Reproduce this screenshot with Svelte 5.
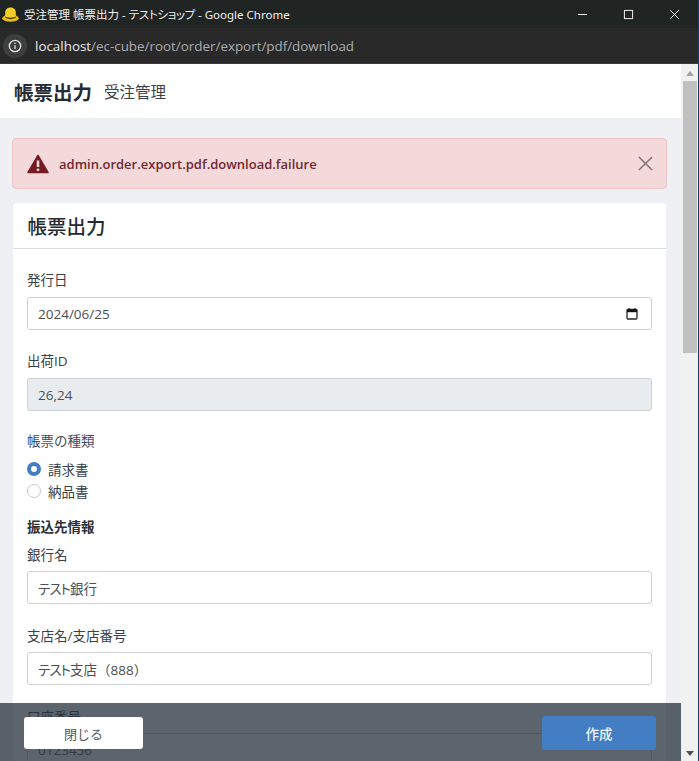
<script>
  const banks = [
    { label: '銀行名', kana: 'テスト', value: '銀行' },
    { label: '支店名/支店番号', kana: 'テスト', value: '支店（888）' },
    { label: '口座番号', kana: '', value: '0123456' }
  ];
</script>

<div class="window">
  <div class="titlebar">
    <svg class="favicon" viewBox="0 0 16 14">
      <ellipse cx="8" cy="10.500" rx="7.800" ry="3.300" fill="#e9bd12" />
      <path d="M3 9.500V5C3 2 5.500 0.500 8 0.500S13 2 13 5v4.500c-2 1.700-8 1.700-10 0z" fill="#f4cf2a" />
      <path d="M3 8.600c2 1.800 8 1.800 10 0v1.300c-2 1.700-8 1.700-10 0z" fill="#3a3208" />
    </svg>
    <span class="win-title">受注管理 帳票出力 - <span class="kana title-kana">テストショップ</span> - Google Chrome</span>
    <div class="win-controls">
      <svg viewBox="0 0 12 12"><path d="M1 6h10" stroke="#fff" /></svg>
      <svg viewBox="0 0 12 12"><rect x="1.500" y="1.500" width="9" height="9" fill="none" stroke="#fff" /></svg>
      <svg viewBox="0 0 12 12"><path d="M1 1l10 10M11 1L1 11" stroke="#fff" /></svg>
    </div>
  </div>

  <div class="addressbar">
    <span class="site-info">
      <svg viewBox="0 0 16 16" width="14" height="14">
        <circle cx="8" cy="8" r="6.500" fill="none" stroke="#e3e3e3" stroke-width="1.500" />
        <path d="M8 7v4.500M8 4.300v1.500" stroke="#e3e3e3" stroke-width="1.500" />
      </svg>
    </span>
    <span class="url"><b>localhost</b>/ec-cube/root/order/export/pdf/download</span>
  </div>

  <div class="viewport">
    <div class="page">
      <header class="page-header">
        <h1>帳票出力</h1>
        <span>受注管理</span>
      </header>

      <main class="content">
        <div class="alert">
          <svg class="alert-icon" viewBox="0 0 22 20">
            <path d="M11 1.500L21 18.500H1z" fill="#721c24" stroke="#721c24" stroke-width="1.500" stroke-linejoin="round" />
            <path d="M11 6.500v6.500" stroke="#f3d9d9" stroke-width="2.600" />
            <circle cx="11" cy="15.800" r="1.400" fill="#f3d9d9" />
          </svg>
          <span class="alert-text">admin.order.export.pdf.download.failure</span>
          <svg class="alert-close" viewBox="0 0 16 16"><path d="M1 1l14 14M15 1L1 15" stroke="#7d7074" stroke-width="1.500" /></svg>
        </div>

        <section class="card">
          <h2 class="card-header">帳票出力</h2>
          <div class="card-body">
            <div class="field">
              <label for="issue-date">発行日</label>
              <div class="input date" id="issue-date">
                <span>2024/06/25</span>
                <svg viewBox="0 0 12 12" width="12" height="13">
                  <rect x="1" y="2" width="10" height="9.500" rx="1" fill="#fff" stroke="#222" stroke-width="1.300" />
                  <path d="M1 3.500h10" stroke="#111" stroke-width="2.400" />
                  <path d="M3 0.500v2M9 0.500v2" stroke="#111" />
                </svg>
              </div>
            </div>

            <div class="field">
              <label for="shipping-id">出荷ID</label>
              <div class="input disabled" id="shipping-id">26,24</div>
            </div>

            <div class="type-group">
              <span class="type-label">帳票の種類</span>
              <div class="radios">
                <div class="radio checked"><i></i>請求書</div>
                <div class="radio"><i></i>納品書</div>
              </div>
            </div>

            <h3 class="sub-title">振込先情報</h3>

            {#each banks as item}
              <div class="field bank">
                <label for={item.label}>{item.label}</label>
                <div class="input" id={item.label}><span><span class="kana input-kana">{item.kana}</span>{item.value}</span></div>
              </div>
            {/each}
          </div>
        </section>
      </main>
    </div>

    <div class="scrollbar">
      <svg viewBox="0 0 8 5" width="8" height="5"><path d="M4 0l4 5H0z" fill="#a3a3a3" /></svg>
      <div class="track"><div class="thumb"></div></div>
      <svg viewBox="0 0 8 5" width="8" height="5"><path d="M0 0h8L4 5z" fill="#505050" /></svg>
    </div>

    <div class="footer-bar">
      <button class="btn-close">閉じる</button>
      <button class="btn-create">作成</button>
    </div>
  </div>
</div>

<style>
  :global(body) {
    margin: 0;
    font-family: 'Open Sans', 'Noto Sans CJK JP', sans-serif;
  }

  .window {
    width: 699px;
    height: 761px;
    display: flex;
    flex-direction: column;
    overflow: hidden;
    background: #eff0f4;
    box-sizing: border-box;
    border-right: 1px solid #1c3a6e;
    font-family: 'Open Sans', 'Noto Sans CJK JP', sans-serif;
  }

  .kana { font-feature-settings: "palt"; }
  .title-kana { letter-spacing: -0.3px; }
  .input-kana { letter-spacing: -0.9px; }

  .titlebar {
    height: 28px;
    flex: none;
    display: flex;
    align-items: center;
    background: #202423;
    color: #f0f0f0;
    font-size: 11.5px;
    padding-left: 2px;
  }
  .favicon { width: 17px; height: 15px; margin-right: 5px; }
  .win-title { font-family: 'Noto Sans', 'Noto Sans CJK JP', sans-serif; white-space: nowrap; }
  .win-controls {
    margin-left: auto;
    display: flex;
    gap: 35px;
    padding-right: 18px;
  }
  .win-controls svg { width: 11px; height: 11px; }

  .addressbar {
    height: 36px;
    flex: none;
    box-sizing: border-box;
    display: flex;
    align-items: center;
    background: #292929;
    border-bottom: 1px solid #3d3d3d;
    padding-left: 3px;
  }
  .site-info {
    width: 24px;
    height: 24px;
    border-radius: 50%;
    background: #3d3f3f;
    display: flex;
    align-items: center;
    justify-content: center;
    margin-right: 8px;
  }
  .url { font-size: 13.4px; color: #a9adb0; white-space: nowrap; }
  .url b { font-weight: 400; color: #e8eaed; }

  .viewport {
    flex: 1;
    min-height: 0;
    display: flex;
    position: relative;
    overflow: hidden;
  }

  .page { flex: 1; min-width: 0; overflow: hidden; }

  .page-header {
    height: 54px;
    box-sizing: border-box;
    background: #fff;
    display: flex;
    align-items: center;
    gap: 12px;
    padding-left: 14px;
    color: #252a33;
  }
  .page-header h1 { margin: 0; font-size: 19.5px; font-weight: 700; }
  .page-header span { font-size: 15.5px; color: #3c4048; }

  .content { padding: 20px 14px 0 12px; }

  .alert {
    height: 51px;
    box-sizing: border-box;
    display: flex;
    align-items: center;
    background: #f3d9d9;
    border: 1px solid #efc5c8;
    border-radius: 4px;
    padding: 0 13px 0 14px;
    margin-bottom: 14px;
  }
  .alert-icon { width: 22px; height: 20px; margin-right: 10px; }
  .alert-text { color: #6f2a33; font-size: 13px; font-weight: 600; }
  .alert-close { width: 15px; height: 15px; margin-left: auto; }

  .card {
    margin-left: 1px;
    margin-right: 1px;
    background: #fff;
    border-radius: 4px 4px 0 0;
  }
  .card-header {
    margin: 0;
    height: 46px;
    box-sizing: border-box;
    border-bottom: 1px solid #dedfe2;
    padding-left: 14.5px;
    display: flex;
    align-items: center;
    font-size: 19.5px;
    font-weight: 500;
    color: #252a33;
  }
  .card-body { padding: 21px 14px 0; }

  .field { margin-bottom: 21px; }
  .field label {
    display: block;
    font-size: 13.5px;
    line-height: 20px;
    color: #3a3f48;
    margin-bottom: 7px;
  }

  .input {
    height: 33px;
    box-sizing: border-box;
    border: 1px solid #ced0d4;
    border-radius: 3px;
    padding: 0 10px;
    display: flex;
    align-items: center;
    font-size: 13.5px;
    color: #4a4f57;
    background: #fff;
  }
  .date { justify-content: space-between; padding-right: 13px; }
  .disabled { background: #e9ecef; }

  .type-label {
    display: block;
    font-size: 13.5px;
    line-height: 18px;
    color: #44495c;
  }
  .radios { margin-top: 8px; }
  .radio {
    display: flex;
    align-items: center;
    gap: 7px;
    height: 22px;
    font-size: 13.5px;
    color: #3a3f48;
  }
  .radio i {
    width: 14px;
    height: 14px;
    box-sizing: border-box;
    border-radius: 50%;
    border: 1px solid #c6c8cc;
    background: #fff;
  }
  .radio.checked i { border: 4.500px solid #437ec4; }

  .sub-title {
    margin: 15px 0 8px;
    font-size: 13.5px;
    line-height: 20px;
    font-weight: 700;
    color: #2b2f38;
  }

  .bank { margin-bottom: 22px; }
  .bank label { margin-bottom: 6px; }

  .scrollbar {
    width: 17px;
    flex: none;
    box-sizing: border-box;
    background: #f1f1f1;
    display: flex;
    flex-direction: column;
    align-items: center;
    padding: 7px 0 5px;
    gap: 5px;
  }
  .track { flex: 1; width: 100%; display: flex; justify-content: center; }
  .thumb { width: 14px; height: 272px; background: #c0c0c0; }

  .footer-bar {
    position: absolute;
    left: 0;
    right: 17px;
    bottom: 0;
    height: 58px;
    box-sizing: border-box;
    display: flex;
    align-items: center;
    justify-content: space-between;
    padding: 2px 25px 0 24px;
    background: rgba(37, 50, 60, 0.75);
  }
  .footer-bar button {
    border: none;
    border-radius: 3px;
    font-family: inherit;
    padding: 0;
  }
  .btn-close { width: 119px; height: 32px; font-size: 13px; background: #fff; color: #525860; }
  .btn-create { width: 114px; height: 34px; font-size: 13.5px; background: #437ec4; color: #eef3fa; font-weight: 500; }
</style>
